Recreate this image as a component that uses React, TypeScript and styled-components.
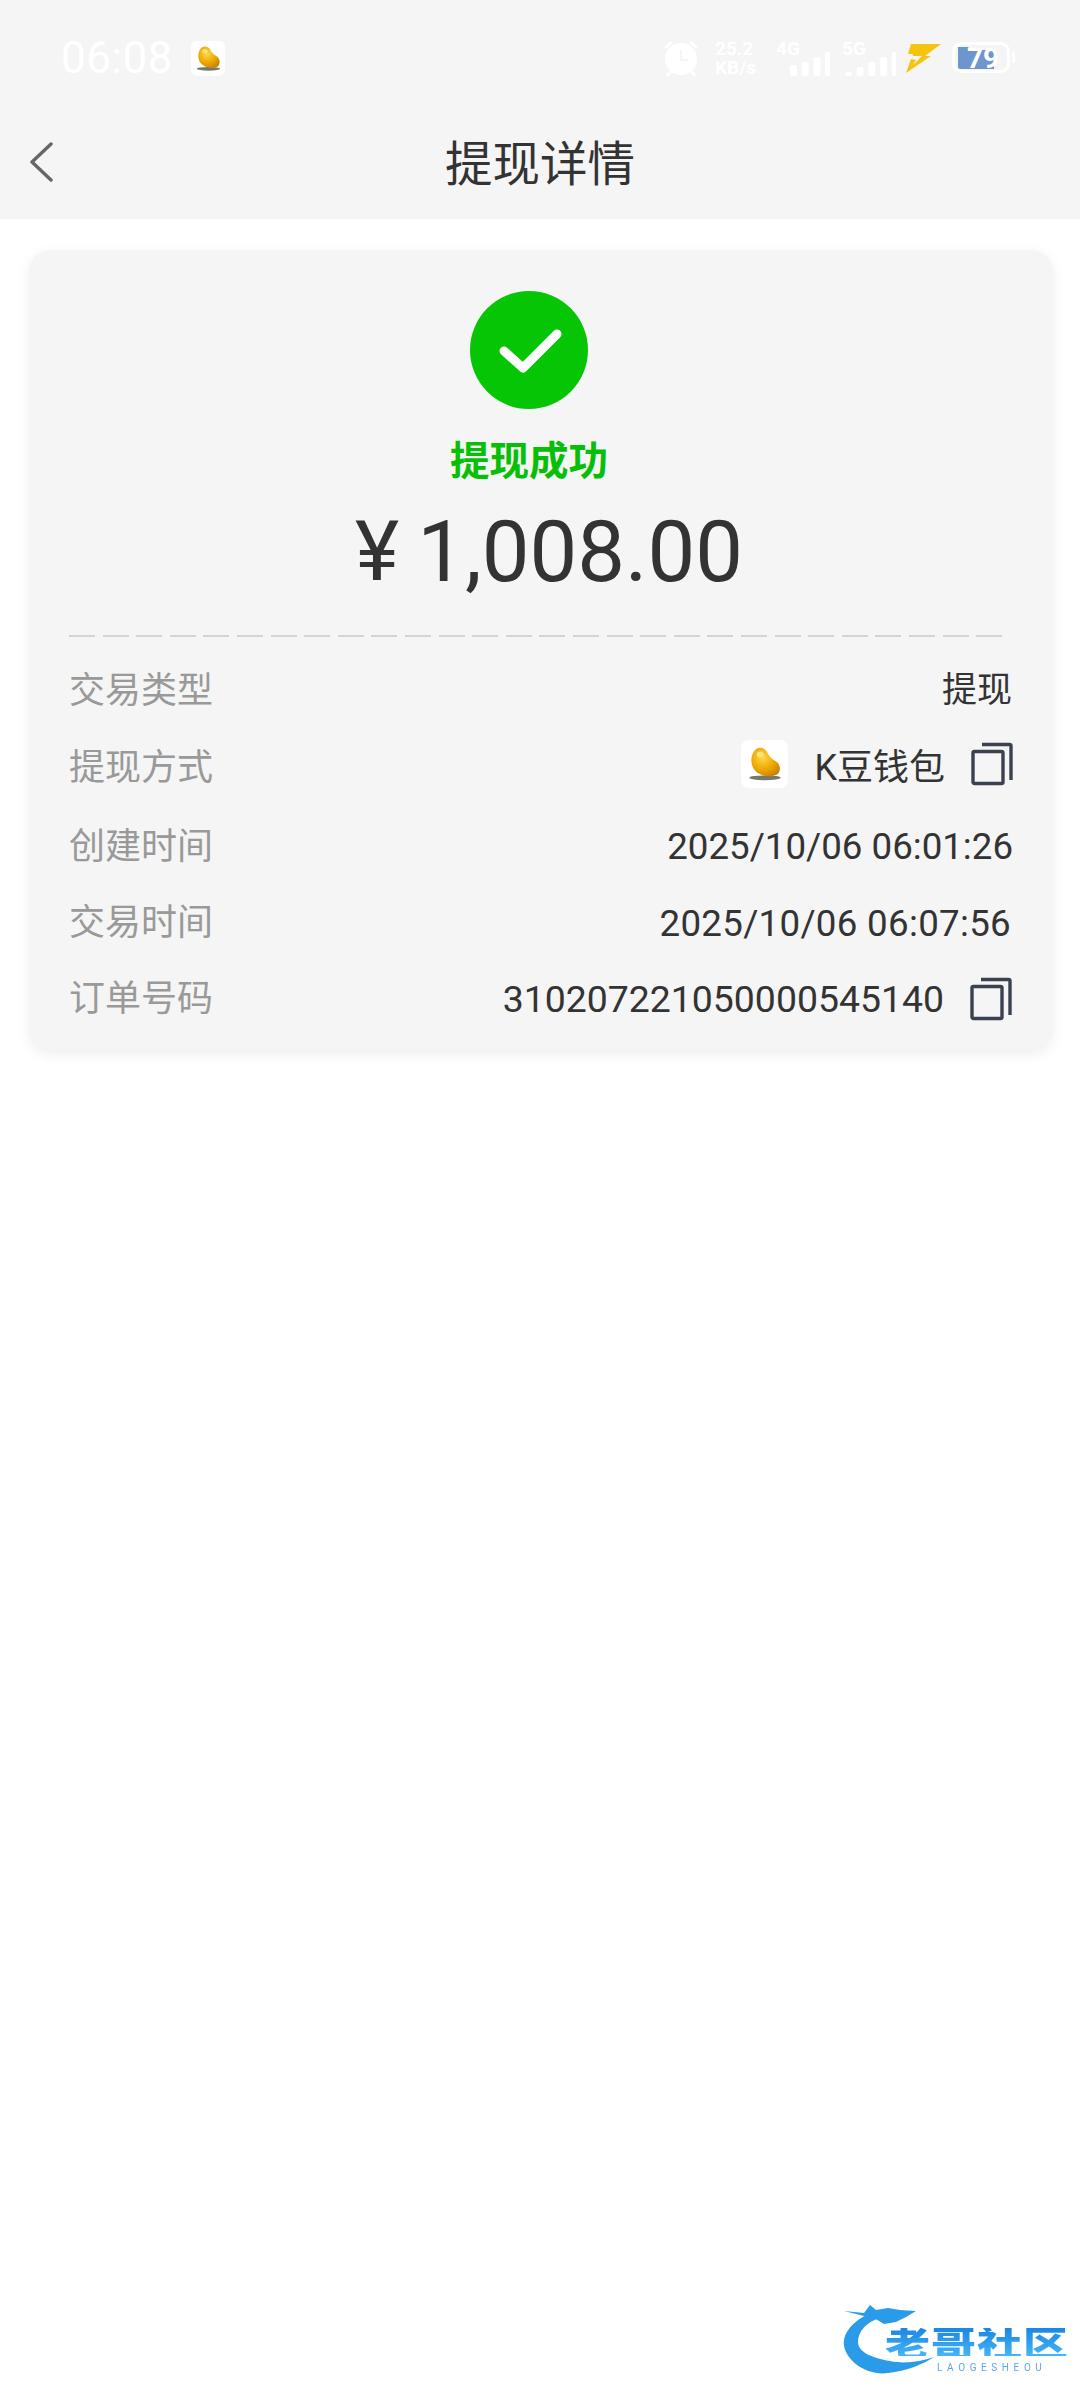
import React from "react";
import styled, { createGlobalStyle } from "styled-components";

const Global = createGlobalStyle`
  html, body { margin: 0; padding: 0; background: #fff; }
  body { font-family: Roboto, "Noto Sans CJK SC", sans-serif; }
  * { box-sizing: border-box; }
`;

const Page = styled.div`
  position: relative;
  width: 1080px;
  height: 2400px;
  background: #fff;
  overflow: hidden;
`;

const Header = styled.header`
  background: #f5f5f5;
  height: 219px;
  display: flex;
  flex-direction: column;
`;

const StatusBar = styled.div`
  height: 116px;
  padding: 0 64px 0 61px;
  display: flex;
  align-items: center;
  justify-content: space-between;
`;

const StatusLeft = styled.div`
  display: flex;
  align-items: center;
  gap: 18px;
`;

const Clock = styled.span`
  font-size: 44px;
  letter-spacing: 0.5px;
  color: #fff;
  line-height: 1;
`;

const StatusRight = styled.div`
  display: flex;
  align-items: center;
  height: 40px;
`;

const Speed = styled.div`
  display: flex;
  flex-direction: column;
  margin: 0 15px 0 16px;
  font-size: 19px;
  font-weight: 700;
  line-height: 19px;
  color: #fff;
  width: 46px;
`;

const Signal = styled.div<{ $gap: number }>`
  position: relative;
  width: 54px;
  height: 40px;
  margin-right: ${(p) => p.$gap}px;
`;

const SignalLabel = styled.span`
  position: absolute;
  left: 0;
  top: 2px;
  font-size: 19px;
  font-weight: 700;
  line-height: 18px;
  color: #fff;
`;

const BarsIcon = styled.svg`
  position: absolute;
  left: 0;
  top: 0;
`;

const BoltIcon = styled.svg`
  margin-right: 11px;
`;

const Nav = styled.div`
  position: relative;
  height: 92px;
  display: flex;
  align-items: center;
  justify-content: center;
`;

const BackIcon = styled.svg`
  position: absolute;
  left: 29px;
  top: 26px;
`;

const Title = styled.h1`
  margin: 0 0 3px;
  font-size: 47.5px;
  font-weight: 400;
  line-height: 60px;
  color: #333;
  font-family: "Noto Sans CJK SC", sans-serif;
`;

const Card = styled.section`
  margin: 31px 27px 0 29px;
  height: 800px;
  padding: 41px 40px 0 40px;
  background: #f5f5f5;
  border-radius: 22px;
  box-shadow: 0 4px 14px rgba(0, 0, 0, 0.07);
  display: flex;
  flex-direction: column;
`;

const Hero = styled.div`
  display: flex;
  flex-direction: column;
  align-items: center;
  height: 344px;
`;

const SuccessIcon = styled.svg`
  display: block;
  margin-right: 25px;
`;

const SuccessText = styled.div`
  margin: 24px 24px 0 0;
  font-family: "Noto Sans CJK SC", sans-serif;
  font-size: 39.5px;
  font-weight: 700;
  line-height: 50px;
  color: #06bf06;
`;

const Amount = styled.div`
  margin: 19px 0 0 16px;
  display: flex;
  align-items: center;
  gap: 18px;
  font-size: 85px;
  line-height: 100px;
  color: #333;
`;

const Yen = styled.span`
  font-size: 84px;
`;

const Dashes = styled.div`
  height: 2px;
  margin-right: 5px;
  background: repeating-linear-gradient(to right, #d4d4d4 0 26px, transparent 26px 33.6px);
`;

const Rows = styled.div`
  display: flex;
  flex-direction: column;
  margin-top: 16px;
`;

const Row = styled.div<{ $h: number; $inset?: number }>`
  display: flex;
  align-items: center;
  justify-content: space-between;
  height: ${(p) => p.$h}px;
  padding-right: ${(p) => p.$inset ?? 0}px;
`;

const Label = styled.span`
  font-family: "Noto Sans CJK SC", sans-serif;
  font-size: 36px;
  padding-bottom: 8px;
  color: #999;
`;

const Value = styled.div<{ $size?: number; $lift?: boolean }>`
  display: flex;
  align-items: center;
  font-size: ${(p) => p.$size ?? 36.7}px;
  padding-bottom: ${(p) => (p.$lift ? 8 : 0)}px;
  color: #333;
  font-family: Roboto, "Noto Sans CJK SC", sans-serif;
`;

const ValueText = styled.span<{ $spacing?: number }>`
  letter-spacing: ${(p) => p.$spacing ?? 0}px;
`;

const BeanTile = styled.span`
  width: 47px;
  height: 48px;
  margin-right: 26px;
  background: #fff;
  border-radius: 8px;
  display: flex;
  align-items: center;
  justify-content: center;
`;

const CopyIcon = styled.svg`
  display: block;
  margin-left: 26px;
  flex: none;
`;

const StatusBeanTile = styled(BeanTile)`
  width: 34px;
  height: 35px;
  margin: 0;
  border-radius: 6px;
`;

const Watermark = styled.div`
  position: absolute;
  left: 840px;
  top: 2302px;
  width: 236px;
  height: 84px;
  filter: blur(0.7px);
`;

const DragonIcon = styled.svg`
  position: absolute;
  left: 0;
  top: 0;
`;

const WatermarkName = styled.div`
  position: absolute;
  left: 45px;
  top: 21px;
  font-family: "Noto Sans CJK SC", sans-serif;
  font-size: 45px;
  font-weight: 900;
  line-height: 38px;
  letter-spacing: 1px;
  white-space: nowrap;
  transform: scaleY(0.76);
  background: linear-gradient(#1a85e4, #45b6f7);
  -webkit-background-clip: text;
  background-clip: text;
  color: transparent;
`;

const WatermarkSub = styled.div`
  position: absolute;
  left: 97px;
  top: 60px;
  font-family: Roboto, sans-serif;
  font-size: 10px;
  letter-spacing: 4.6px;
  line-height: 11px;
  color: #5aa9e6;
  white-space: nowrap;
`;

function Bean({ size }: { size: number }) {
  const id = `bean${size}`;
  return (
    <svg width={size} height={size} viewBox="2 2 28 30">
      <defs>
        <radialGradient id={id} cx="0.4" cy="0.35" r="0.75">
          <stop offset="0" stopColor="#ffd84a" />
          <stop offset="0.55" stopColor="#eda800" />
          <stop offset="1" stopColor="#c77f00" />
        </radialGradient>
      </defs>
      <ellipse cx="16" cy="28.5" rx="13" ry="2" fill="#77786a" />
      <path d="M6 8c2-5 8-6 11-2 2 3 3 6 7 8 4 2 6 7 3 11-3 3-11 3-16 0C5 22 3 14 6 8z" fill={`url(#${id})`} />
      <ellipse cx="12" cy="9" rx="3" ry="2.4" fill="#ffe27a" />
    </svg>
  );
}

function Copy() {
  return (
    <CopyIcon width="42" height="44" viewBox="0 0 42 44" fill="none" stroke="#3a4250" strokeWidth="3.4">
      <rect x="2" y="9.5" width="30" height="32" rx="1.5" />
      <path d="M11 2.5h27.5a1.5 1.5 0 0 1 1.5 1.5v34" />
    </CopyIcon>
  );
}

function Bars({ left, heights }: { left: number; heights: number[] }) {
  return (
    <BarsIcon width="54" height="40">
      {heights.map((h, i) => (
        <rect key={i} x={left + i * 11.7} y={38 - h} width="7" height={h} rx="2" fill="#fff" />
      ))}
    </BarsIcon>
  );
}

export default function App() {
  return (
    <Page>
      <Global />
      <Header>
        <StatusBar>
          <StatusLeft>
            <Clock>06:08</Clock>
            <StatusBeanTile>
              <Bean size={27} />
            </StatusBeanTile>
          </StatusLeft>
          <StatusRight>
            <svg width="36" height="38" viewBox="0 0 36 38" fill="#fff">
              <circle cx="18" cy="20" r="16" />
              <path d="M1 8l7-6 2 2-7 6zM35 8l-7-6-2 2 7 6zM4 34l4-4 2 2-4 5H3zM32 34l-4-4-2 2 4 5h3z" />
              <path d="M18 11v10h7" fill="none" stroke="#f5f5f5" strokeWidth="2.5" />
            </svg>
            <Speed>
              <span>25.2</span>
              <span>KB/s</span>
            </Speed>
            <Signal $gap={12}>
              <SignalLabel>4G</SignalLabel>
              <Bars left={14} heights={[11, 14, 19, 24]} />
            </Signal>
            <Signal $gap={9}>
              <SignalLabel>5G</SignalLabel>
              <Bars left={3} heights={[4, 9, 14, 19, 24]} />
            </Signal>
            <BoltIcon width="36" height="30" viewBox="0 0 36 30">
              <path d="M6 1h30L20 13h6L1 30l5-14 5 1-3 5 9-9h-9z" fill="#f6c40f" />
              <path d="M6 1h14L9 11H3z" fill="#f6c40f" />
            </BoltIcon>
            <svg width="64" height="32" viewBox="0 0 64 32">
              <rect x="1.5" y="1.5" width="55" height="28" rx="8" fill="none" stroke="#fff" strokeWidth="3" />
              <path d="M6 5h10l2 3h24v19H8a2 2 0 0 1-2-2z" fill="#6f96cc" />
              <rect x="60" y="10" width="3" height="11" rx="1.5" fill="#fff" />
              <text x="15" y="26" fontFamily="Roboto, sans-serif" fontSize="28" fontWeight="700" fill="#fff">
                79
              </text>
            </svg>
          </StatusRight>
        </StatusBar>
        <Nav>
          <BackIcon width="24" height="40" viewBox="0 0 24 40" fill="none" stroke="#666" strokeWidth="3.4" strokeLinecap="round" strokeLinejoin="round">
            <path d="M22 2L3 20l19 18" />
          </BackIcon>
          <Title>提现详情</Title>
        </Nav>
      </Header>
      <Card>
        <Hero>
          <SuccessIcon width="118" height="118" viewBox="0 0 118 118">
            <circle cx="59" cy="59" r="59" fill="#05c505" />
            <path d="M34 60l19 17 34-34" fill="none" stroke="#fff" strokeWidth="9" strokeLinecap="round" strokeLinejoin="round" />
          </SuccessIcon>
          <SuccessText>提现成功</SuccessText>
          <Amount>
            <Yen>¥</Yen>
            <span>1,008.00</span>
          </Amount>
        </Hero>
        <Dashes />
        <Rows>
          <Row $h={75} $inset={1}>
            <Label>交易类型</Label>
            <Value $size={35} $lift>提现</Value>
          </Row>
          <Row $h={80}>
            <Label>提现方式</Label>
            <Value $size={36} $lift>
              <BeanTile>
                <Bean size={36} />
              </BeanTile>
              K豆钱包
              <Copy />
            </Value>
          </Row>
          <Row $h={77} $inset={-1}>
            <Label>创建时间</Label>
            <Value>
              <ValueText>2025/10/06 06:01:26</ValueText>
            </Value>
          </Row>
          <Row $h={76} $inset={2}>
            <Label>交易时间</Label>
            <Value>
              <ValueText $spacing={0.3}>2025/10/06 06:07:56</ValueText>
            </Value>
          </Row>
          <Row $h={76} $inset={1}>
            <Label>订单号码</Label>
            <Value $size={37.4}>
              <ValueText>310207221050000545140</ValueText>
              <Copy />
            </Value>
          </Row>
        </Rows>
      </Card>
      <Watermark>
        <DragonIcon width="100" height="84" viewBox="0 0 100 84">
          <path d="M28 12C12 20 2 32 4 44c3 16 24 30 44 27 18-2 36-9 46-16-14 5-30 7-44 4C32 56 18 50 18 40c0-10 8-20 22-24z" fill="#2a9be8" />
          <path d="M4 9l20 2 6-8 6 5 12-2 12 2 16 1-10 6-10 5-12 2-10-6-10-2z" fill="#2a9be8" />
        </DragonIcon>
        <WatermarkName>老哥社区</WatermarkName>
        <WatermarkSub>LAOGESHEOU</WatermarkSub>
      </Watermark>
    </Page>
  );
}
